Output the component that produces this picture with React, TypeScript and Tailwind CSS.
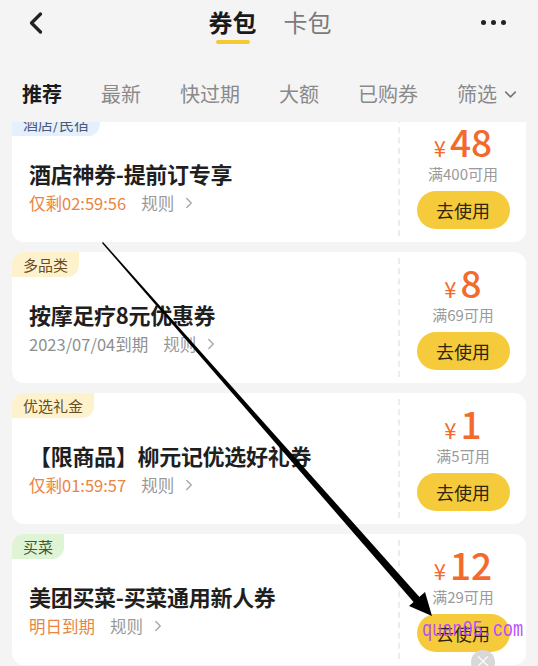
import { ChevronLeft, ChevronDown, ChevronRight } from 'lucide-react';

type Coupon = {
  tag: string;
  tagClass: string;
  title: string;
  note: string;
  noteClass: string;
  amount: string;
  min: string;
};

const coupons: Coupon[] = [
  {
    tag: '酒店/民宿',
    tagClass: 'bg-[#e4f0fd] text-[#4d5b78]',
    title: '酒店神券-提前订专享',
    note: '仅剩02:59:56',
    noteClass: 'text-[#ea8443]',
    amount: '48',
    min: '满400可用',
  },
  {
    tag: '多品类',
    tagClass: 'bg-[#fdf2cc] text-[#6b4c1e]',
    title: '按摩足疗8元优惠券',
    note: '2023/07/04到期',
    noteClass: 'text-[#8f8f8f]',
    amount: '8',
    min: '满69可用',
  },
  {
    tag: '优选礼金',
    tagClass: 'bg-[#fdf2cc] text-[#6b4c1e]',
    title: '【限商品】柳元记优选好礼券',
    note: '仅剩01:59:57',
    noteClass: 'text-[#ea8443]',
    amount: '1',
    min: '满5可用',
  },
  {
    tag: '买菜',
    tagClass: 'bg-[#dff4d5] text-[#3f5a33]',
    title: '美团买菜-买菜通用新人券',
    note: '明日到期',
    noteClass: 'text-[#ea8443]',
    amount: '12',
    min: '满29可用',
  },
];

const filters = ['推荐', '最新', '快过期', '大额', '已购券'];

const CouponCard = ({ c }: { c: Coupon }) => (
  <div className="mx-[12px] h-[131px] shrink-0 rounded-[12px] bg-white flex relative">
    <div className={`absolute left-0 top-0 h-[25px] px-[11px] rounded-tl-[12px] rounded-br-[12px] text-[15px] leading-[25px] ${c.tagClass}`}>
      {c.tag}
    </div>
    <div className="flex-1 pl-[17px] pt-[47px]">
      <div className="text-[22px] font-bold leading-[30px] text-[#1f1f1f] whitespace-nowrap tracking-[-0.3px]">{c.title}</div>
      <div className="mt-[3px] flex items-center text-[16.5px] leading-[24px]">
        <span className={c.noteClass}>{c.note}</span>
        <span className="ml-[15px] text-[#9a9a9a]">规则</span>
        <ChevronRight size={18} strokeWidth={1.8} className="ml-[6px] text-[#a8a8a8]" />
      </div>
    </div>
    <div className="w-[128px] my-[6px] border-l-2 border-dashed border-[#ececec] flex flex-col items-center">
      <div className="mt-[6px] h-[38px] flex items-baseline text-[#f36a2d] leading-none">
        <span className="text-[22px] mr-[4px]">¥</span>
        <span className="text-[37px] font-medium">{c.amount}</span>
      </div>
      <div className="mt-[3px] text-[15px] leading-[20px] text-[#9a9a9a]">{c.min}</div>
      <div className="mt-[7px] w-[93px] h-[38px] rounded-full bg-[#f6cb3b] flex items-center justify-center text-[18px] text-[#2f2510]">
        去使用
      </div>
    </div>
  </div>
);

export default function App() {
  return (
    <div
      className="relative w-[538px] h-[666px] overflow-hidden bg-[#f4f4f4]"
      style={{ fontFamily: '"Noto Sans CJK SC", "Noto Sans", sans-serif' }}
    >
      {/* Header */}
      <div className="h-[48px] relative flex items-center justify-center">
        <ChevronLeft size={36} strokeWidth={2.2} className="absolute left-[18px] top-[5px] text-[#222]" />
        <div className="flex items-start gap-[27px] pl-[2px] mt-[2px]">
          <div className="flex flex-col items-center">
            <span className="text-[24px] font-bold leading-[32px] text-[#1a1a1a]">券包</span>
            <span className="mt-[2px] w-[34px] h-[4px] rounded-full bg-[#f5c932]" />
          </div>
          <span className="text-[24px] leading-[32px] text-[#7a7a7a]">卡包</span>
        </div>
        <div className="absolute right-[32px] top-[20px] flex gap-[5px]">
          <span className="w-[5px] h-[5px] rounded-full bg-[#222]" />
          <span className="w-[5px] h-[5px] rounded-full bg-[#222]" />
          <span className="w-[5px] h-[5px] rounded-full bg-[#222]" />
        </div>
      </div>

      {/* Filter tabs */}
      <div className="h-[74px] pt-[32px] pl-[22px] flex items-start gap-[39px] text-[20px] leading-[28px] whitespace-nowrap">
        {filters.map((f, i) => (
          <span key={f} className={i === 0 ? 'font-bold text-[#1a1a1a]' : 'text-[#8a8a8a]'}>
            {f}
          </span>
        ))}
        <span className="flex items-center text-[#8a8a8a]">
          筛选
          <ChevronDown size={19} strokeWidth={2} className="ml-[4px] text-[#777]" />
        </span>
      </div>

      {/* Coupon list */}
      <div className="h-[544px] overflow-hidden">
        <div className="-mt-[11px] flex flex-col gap-[10px]">
          {coupons.map((c) => (
            <CouponCard key={c.title} c={c} />
          ))}
        </div>
      </div>

      {/* Annotation arrow */}
      <svg className="absolute inset-0 pointer-events-none" width="538" height="666" viewBox="0 0 538 666">
        <polygon points="102,243 103,242 423,601 417,606" fill="#000" />
        <polygon points="432,616 409,606 425,592" fill="#000" />
      </svg>

      {/* Watermark */}
      <div
        className="absolute left-[422px] top-[619px] text-[17px] leading-[24px] text-[#b84dff] tracking-[-0.1px] scale-y-125 pointer-events-none"
        style={{ fontFamily: '"Liberation Mono", monospace' }}
      >
        quan05.com
      </div>

      {/* Floating close */}
      <div className="absolute left-[471px] top-[650px] w-[24px] h-[24px] rounded-full bg-[#d8d8d8] flex items-start justify-center text-white text-[16px] leading-[20px]">
        ×
      </div>
    </div>
  );
}
